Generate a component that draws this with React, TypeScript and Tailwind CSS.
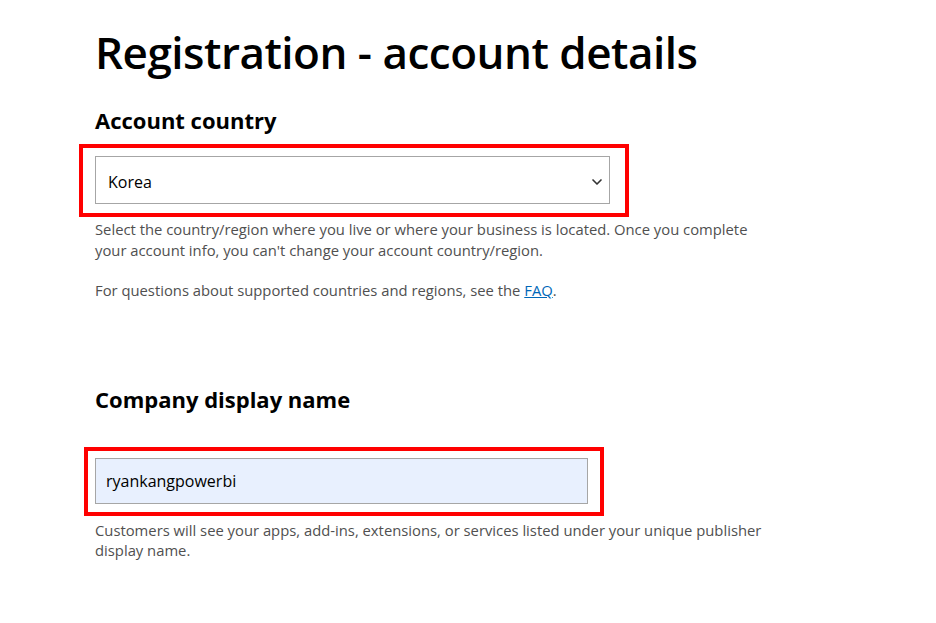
import { ChevronDown } from "lucide-react";

export default function App() {
  return (
    <div className="min-h-[623px] bg-white text-black font-['Open_Sans',sans-serif]">
      <div className="pl-[95px] pt-[26px]">
        <h1 className="text-[44px] leading-[52px] font-semibold tracking-[-0.5px]">Registration - account details</h1>

        <h2 className="mt-[27px] text-[22px] leading-[30px] font-bold">Account country</h2>
        <div className="mt-[9px] -ml-[16px] w-[550px] border-4 border-[#ff0000] pl-[12px] pt-[8px] pr-[15px] pb-[9px]">
          <div className="flex h-[48px] items-center justify-between border border-[#a6a6a6] bg-white pl-[12px] pr-[4px] pt-[3px]">
            <span className="text-[16px]">Korea</span>
            <ChevronDown size={16} strokeWidth={2.5} className="text-[#333]" />
          </div>
        </div>

        <p className="mt-[2px] w-[680px] text-[14.8px] leading-[21px] text-[#505050]">
          Select the country/region where you live or where your business is located. Once you complete your account
          info, you can't change your account country/region.
        </p>
        <p className="mt-[19px] text-[14.8px] leading-[21px] text-[#505050]">
          For questions about supported countries and regions, see the{" "}
          <a href="#" className="text-[#0067b8] underline">
            FAQ
          </a>
          .
        </p>

        <h2 className="mt-[83px] text-[22px] leading-[30px] font-bold">Company display name</h2>
        <div className="mt-[33px] -ml-[11px] w-[520px] border-4 border-[#ff0000] pl-[7px] pt-[7px] pr-[12px] pb-[8px]">
          <div className="flex h-[46px] items-center border border-[#a6a6a6] bg-[#e8f0fe] pl-[10px]">
            <span className="text-[16px]">ryankangpowerbi</span>
          </div>
        </div>

        <p className="mt-[4px] w-[680px] text-[14.8px] leading-[20px] text-[#505050]">
          Customers will see your apps, add-ins, extensions, or services listed under your unique publisher display
          name.
        </p>
      </div>
    </div>
  );
}
